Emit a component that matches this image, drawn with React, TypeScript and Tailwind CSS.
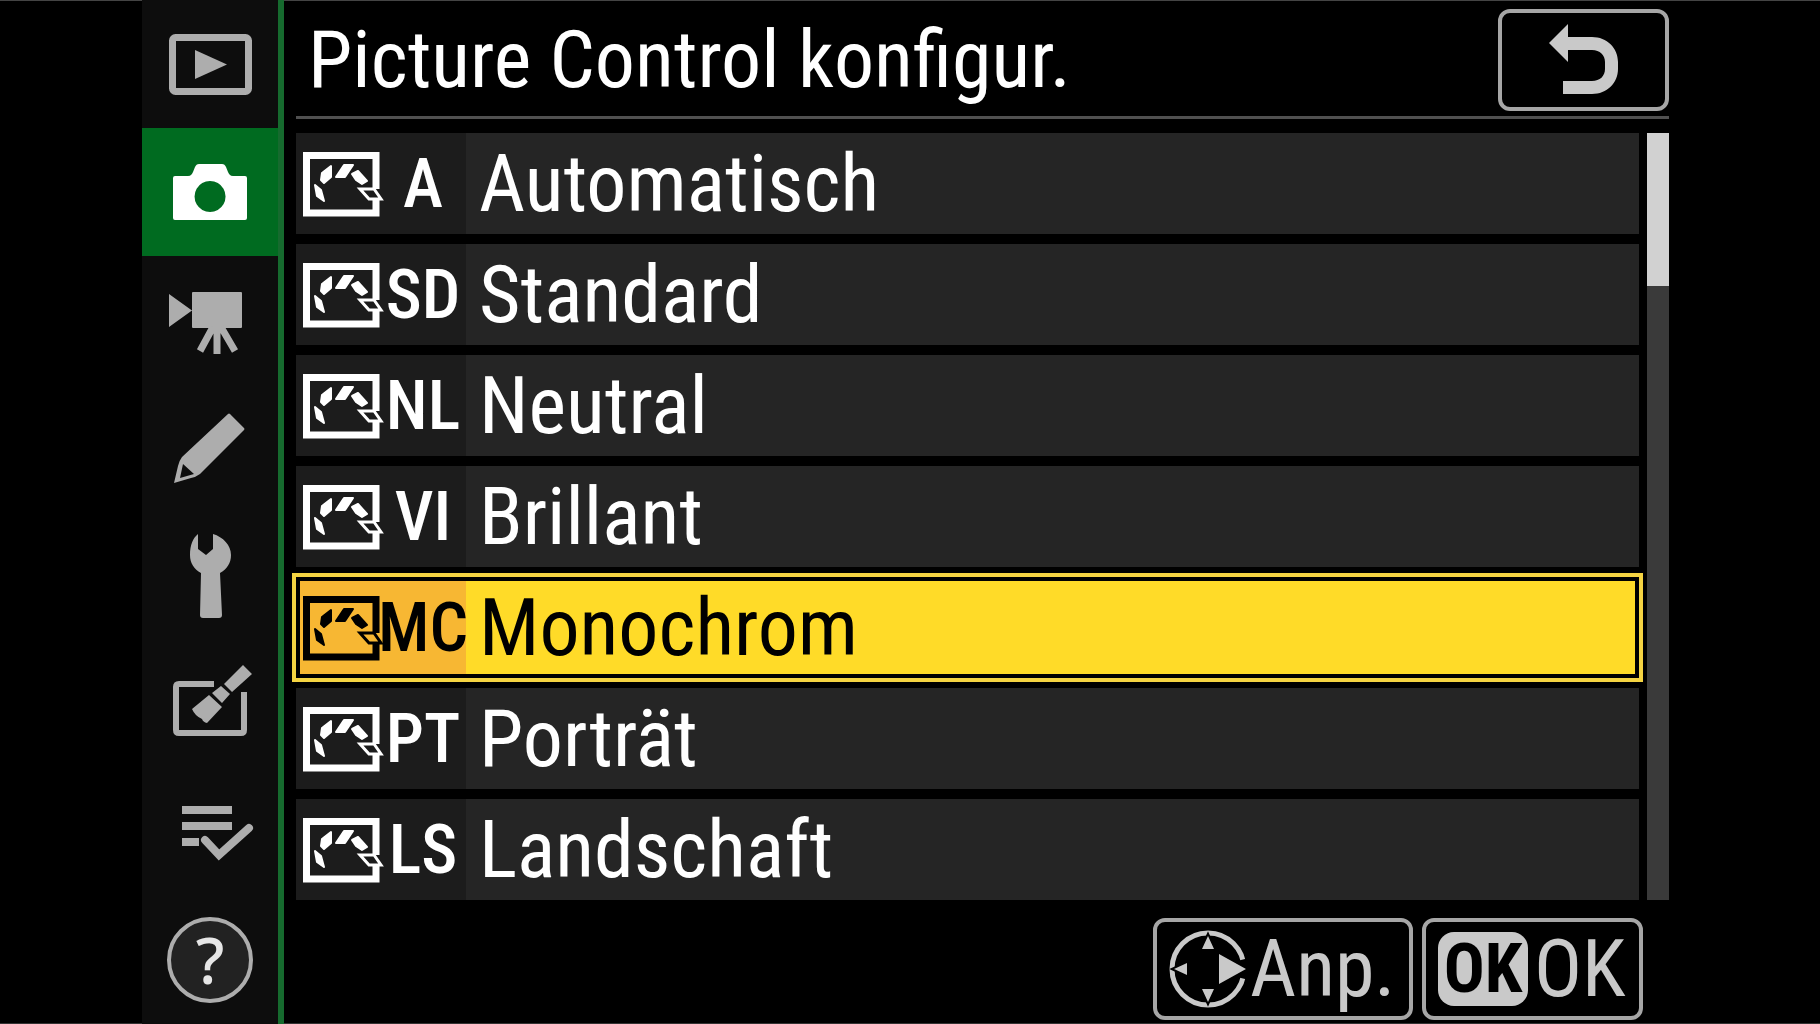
import { useState } from "react";
import clsx from "clsx";

const controls = [
  { code: "A", name: "Automatisch" },
  { code: "SD", name: "Standard" },
  { code: "NL", name: "Neutral" },
  { code: "VI", name: "Brillant" },
  { code: "MC", name: "Monochrom" },
  { code: "PT", name: "Porträt" },
  { code: "LS", name: "Landschaft" },
];

// every tab icon is drawn on the same 136 x 128 tile
const tabs = [
  {
    label: "Wiedergabe",
    icon: (
      <>
        <rect x="30.5" y="37.5" width="76" height="54" rx="3" fill="none" stroke="currentColor" strokeWidth="7" />
        <path d="M53 50v29l32-14.500z" />
      </>
    ),
  },
  {
    label: "Fotoaufnahme",
    icon: (
      <path
        fillRule="evenodd"
        d="M33 48h13c3 0 4-2 5-4l2-5c1-2 2-3 4-3h23c2 0 3 1 4 3l2 5c1 2 2 4 5 4h12q2 0 2 2v40q0 2-2 2H33q-2 0-2-2V50q0-2 2-2zM68 53a15.500 15.500 0 1 0 .1 0z"
      />
    ),
  },
  {
    label: "Filmaufnahme",
    icon: (
      <>
        <path d="M27 38v33l23-16.500zM50 37q0-1 1-1h48q1 0 1 1v34q0 1-1 1H51q-1 0-1-1z" />
        <path d="M71 71L58 95M75 70v28M79 71L93 95" fill="none" stroke="currentColor" strokeWidth="7" />
      </>
    ),
  },
  {
    label: "Individualfunktionen",
    icon: (
      <path
        fillRule="evenodd"
        d="M86 30q1-1 2 0l14 14q1 1 0 2L58 90q-4 3-9 4l-17 5 4-17q1-5 4-9zM41 80l-3 14 14-4z"
      />
    ),
  },
  {
    label: "System",
    icon: (
      <path d="M56 22v15l8 6 7-6V22c10 3 18 11 18 21 0 8-4 14-11 18l2 42q0 3-3 3H61q-3 0-3-3l1-42c-7-4-11-10-11-18 0-10 3-17 8-21z" />
    ),
  },
  {
    label: "Bildbearbeitung",
    icon: (
      <>
        <path d="M72 44H37q-3 0-3 3v43q0 3 3 3h62q3 0 3-3V52" fill="none" stroke="currentColor" strokeWidth="6" />
        <path d="M101 25l9 9-20 18-8-8zM79 46l9 8-8 9-10-10zM67 55l13 12-15 16q-4-1-5-4-7-3-10-10z" />
      </>
    ),
  },
  {
    label: "Mein Menü",
    icon: (
      <>
        <path d="M40 38h50v8H40zM40 54h50v8H40zM40 70h17v8H40z" />
        <path d="M63 72l14 15 30-27" fill="none" stroke="currentColor" strokeWidth="8" strokeLinecap="round" />
      </>
    ),
  },
];

function PictureControlIcon() {
  return (
    <svg viewBox="0 0 81 66" className="h-[66px] w-[81px] shrink-0" fill="currentColor" aria-hidden="true">
      <path d="M73 38V4.500H3.500v57.500H73V49" fill="none" stroke="currentColor" strokeWidth="7" />
      <path
        d="M12 34l6 5 3 11-7-5zM28 15v11l-7 6-3-3 1-7zM33 26l8-12h9l-8 12zM49 23l6-3 9 10-5 3-6-4z"
        stroke="currentColor"
        strokeWidth="2"
        strokeLinejoin="round"
      />
      <path d="M57 38h14l7 10H66z" fill="none" stroke="currentColor" strokeWidth="3" />
    </svg>
  );
}

function Dpad() {
  return (
    <svg viewBox="0 0 80 78" className="h-[78px] w-20 shrink-0" fill="currentColor" aria-hidden="true">
      <circle cx="39" cy="39" r="36" fill="none" stroke="currentColor" strokeWidth="5" />
      <path d="M64 32l16-4v22l-16-4z" className="text-black" />
      <path
        d="M39 6l6 13H33zM39 72l6-13H33zM5 39l13-6v12zM50 24v30l27-15z"
        className="stroke-black [paint-order:stroke]"
        strokeWidth="4"
      />
    </svg>
  );
}

export default function App() {
  const [tab, setTab] = useState(1);
  const [selected, setSelected] = useState("MC");

  return (
    <div className="flex min-h-screen bg-black pr-[151px] pl-[142px] font-['Roboto_Condensed','Roboto',sans-serif] text-white shadow-[inset_0_1px_0_#444,inset_0_-1px_0_#333]">
      <nav className="grid w-[142px] shrink-0 grid-rows-8 border-r-[6px] border-[#166a2e] bg-[#0d0d0d]">
        {tabs.map((t, i) => (
          <button
            key={t.label}
            aria-label={t.label}
            onClick={() => setTab(i)}
            className={clsx("flex items-center", i === tab ? "bg-[#006b20] text-white" : "text-[#adadad]")}
          >
            <svg viewBox="0 0 136 128" className="h-32 w-[136px]" fill="currentColor" aria-hidden="true">
              {t.icon}
            </svg>
          </button>
        ))}
        <button aria-label="Hilfe" className="flex items-center justify-center">
          <span className="flex h-[86px] w-[86px] items-center justify-center rounded-full border-4 border-[#adadad] bg-[#222] font-['Noto_Sans',sans-serif] text-[64px] leading-none font-medium text-[#e6e6e6]">
            ?
          </span>
        </button>
      </nav>

      <main className="flex min-w-0 flex-1 flex-col pl-3">
        <header className="flex h-[119px] items-start justify-between border-b-[3px] border-[#505050] pt-[9px]">
          <h1 className="pl-3 text-[80px] leading-[102px] whitespace-nowrap">Picture Control konfigur.</h1>
          <button
            aria-label="Zurück"
            className="flex h-[102px] w-[171px] items-center justify-center rounded-xl border-4 border-[#a6a6a6] text-[#c9c9c9]"
          >
            <svg viewBox="0 0 70 72" className="h-[72px] w-[70px]" fill="currentColor" aria-hidden="true">
              <path d="M0 19L19 0v13h24c15 0 26 11 26 25v7c0 14-11 25-26 25H14V57h29c8 0 13-5 13-12v-7c0-7-5-12-13-12H19v12z" />
            </svg>
          </button>
        </header>

        <div className="flex gap-2 pt-[14px]">
          <ul className="flex flex-1 flex-col gap-[10px]">
            {controls.map((c) => (
              <li key={c.code}>
                <button
                  aria-pressed={c.code === selected}
                  onClick={() => setSelected(c.code)}
                  className={clsx(
                    "flex h-[101px] w-full items-stretch text-left",
                    c.code === selected
                      ? "bg-[#ffdb28] text-black shadow-[inset_0_0_0_4px_#000] outline-4 outline-[#f5d442]"
                      : "bg-[#252525]"
                  )}
                >
                  <span
                    className={clsx(
                      "flex w-[170px] items-center pl-[7px]",
                      c.code === selected ? "bg-[#f7b733] shadow-[inset_4px_4px_0_#000,inset_0_-4px_0_#000]" : "bg-[#1c1c1c]"
                    )}
                  >
                    <PictureControlIcon />
                    <span className="flex w-[78px] justify-center text-[68px] font-medium">{c.code}</span>
                  </span>
                  <span className="flex items-center pl-[13px] text-[80px] leading-none">{c.name}</span>
                </button>
              </li>
            ))}
          </ul>
          <div className="w-[22px] bg-[#3a3a3a]">
            <div className="h-[153px] bg-[#d1d1d1]" />
          </div>
        </div>

        <footer className="mt-[18px] flex justify-end gap-[9px] pr-[26px] text-[80px] leading-none text-[#c9c9c9]">
          <button className="flex h-[102px] w-[260px] items-center gap-px rounded-xl border-4 border-[#a6a6a6] pl-3">
            <Dpad />
            Anp.
          </button>
          <button className="flex h-[102px] w-[221px] items-center gap-[6px] rounded-xl border-4 border-[#a6a6a6] pl-3">
            <span className="flex h-[74px] w-[90px] items-center justify-center rounded-2xl bg-[#c9c9c9] text-[68px] font-bold text-black">
              OK
            </span>
            OK
          </button>
        </footer>
      </main>
    </div>
  );
}
